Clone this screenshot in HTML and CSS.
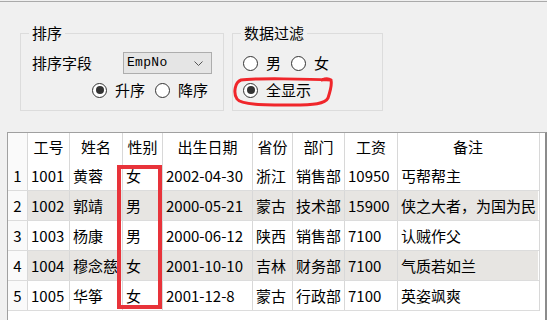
FILE: index.html
```html
<!DOCTYPE html>
<html lang="zh-CN">
<head>
  <meta charset="UTF-8" />
  <title>员工信息</title>
  <link rel="stylesheet" href="styles.css">
</head>
<body>
  <div class="topline"></div>

  <div class="panel">
    <div class="group group-sort">
      <span class="group-title">排序</span>
      <div class="row">
        <span class="field-label">排序字段</span>
        <div class="combo">
          <span class="combo-text">EmpNo</span>
          <svg class="combo-arrow" width="9" height="5" viewBox="0 0 9 5">
            <polyline points="0.5,0.5 4.5,4.5 8.5,0.5" fill="none" stroke="#555" stroke-width="1"/>
          </svg>
        </div>
      </div>
      <div class="row radios indent">
        <span class="radio checked"></span><span class="radio-label">升序</span>
        <span class="radio"></span><span class="radio-label">降序</span>
      </div>
    </div>

    <div class="group group-filter">
      <span class="group-title">数据过滤</span>
      <div class="row radios">
        <span class="radio"></span><span class="radio-label">男</span>
        <span class="radio"></span><span class="radio-label">女</span>
      </div>
      <div class="row radios second">
        <span class="radio checked"></span><span class="radio-label">全显示</span>
      </div>
      <!-- 手画的红圈 -->
      <svg class="mark-circle" width="104" height="34" viewBox="0 0 104 34">
        <path d="M99 5 C80 4, 22 3, 9 5 C3 7, 1 18, 5 24 C9 30, 32 30, 60 30 C82 30, 93 29, 96 23 C98 17, 100 9, 99 5 C96 3, 92 4, 90 5"
              fill="none" stroke="#f0262b" stroke-width="3" stroke-linecap="round"/>
      </svg>
    </div>
  </div>

  <div class="grid-wrap">
    <div class="grid">
      <div class="tr head">
        <div class="rh"></div>
        <div class="td">工号</div>
        <div class="td">姓名</div>
        <div class="td">性别</div>
        <div class="td">出生日期</div>
        <div class="td">省份</div>
        <div class="td">部门</div>
        <div class="td">工资</div>
        <div class="td">备注</div>
      </div>
      <div class="tr">
        <div class="rh">1</div>
        <div class="td">1001</div><div class="td">黄蓉</div><div class="td">女</div>
        <div class="td">2002-04-30</div><div class="td">浙江</div><div class="td">销售部</div>
        <div class="td">10950</div><div class="td">丐帮帮主</div>
      </div>
      <div class="tr alt">
        <div class="rh">2</div>
        <div class="td">1002</div><div class="td">郭靖</div><div class="td">男</div>
        <div class="td">2000-05-21</div><div class="td">蒙古</div><div class="td">技术部</div>
        <div class="td">15900</div><div class="td">侠之大者，为国为民</div>
      </div>
      <div class="tr">
        <div class="rh">3</div>
        <div class="td">1003</div><div class="td">杨康</div><div class="td">男</div>
        <div class="td">2000-06-12</div><div class="td">陕西</div><div class="td">销售部</div>
        <div class="td">7100</div><div class="td">认贼作父</div>
      </div>
      <div class="tr alt">
        <div class="rh">4</div>
        <div class="td">1004</div><div class="td">穆念慈</div><div class="td">女</div>
        <div class="td">2001-10-10</div><div class="td">吉林</div><div class="td">财务部</div>
        <div class="td">7100</div><div class="td">气质若如兰</div>
      </div>
      <div class="tr">
        <div class="rh">5</div>
        <div class="td">1005</div><div class="td">华筝</div><div class="td">女</div>
        <div class="td">2001-12-8</div><div class="td">蒙古</div><div class="td">行政部</div>
        <div class="td">7100</div><div class="td">英姿飒爽</div>
      </div>
    </div>
    <div class="mark-rect"></div>
  </div>
</body>
</html>
```

FILE: styles.css
```css
body {
  margin: 0;
  width: 547px;
  height: 320px;
  overflow: hidden;
  background: #f0f0f0;
  font-family: "Noto Sans CJK SC", "Noto Sans", sans-serif;
  font-size: 15px;
  color: #000;
}

.topline {
  margin-top: 1px;
  height: 1px;
  background: #aaaaaa;
}

.panel {
  display: flex;
  gap: 8px;
  padding: 31px 0 0 20px;
  height: 99px;
}

.group {
  position: relative;
  border: 1px solid #dcdcdc;
  height: 76px;
}

.group-sort {
  width: 191px;
  padding-left: 11px;
}

.group-filter {
  width: 139px;
  padding-left: 10px;
}

.group-title {
  position: absolute;
  top: -10px;
  left: 8px;
  padding: 0 3px;
  line-height: 18px;
  background: #f0f0f0;
}

.row {
  display: flex;
  align-items: center;
  height: 22px;
  line-height: 22px;
}

.group-sort .row:first-of-type {
  margin-top: 18px;
}

.field-label {
  width: 91px;
}

.combo {
  height: 20px;
  width: 76px;
  border: 1px solid #adadad;
  background: #e5e5e5;
  display: flex;
  align-items: center;
  justify-content: space-between;
  padding: 0 8px 0 3px;
}

.combo-text {
  font-family: "Liberation Mono", monospace;
  font-size: 13px;
  letter-spacing: 0.3px;
}

.indent {
  margin-top: 5px;
  padding-left: 60px;
}

.radios .radio + .radio-label {
  margin-left: 8px;
  margin-right: 10px;
}

.radio {
  width: 13px;
  height: 13px;
  border: 1px solid #333;
  border-radius: 50%;
  background: #fff;
  position: relative;
  flex: none;
}

.radio.checked::after {
  content: "";
  position: absolute;
  left: 2.5px;
  top: 2.5px;
  width: 8px;
  height: 8px;
  border-radius: 50%;
  background: #333;
}

.group-filter .row:first-of-type {
  margin-top: 18px;
}

.group-filter .second {
  margin-top: 5px;
}

.mark-circle {
  position: absolute;
  left: -1px;
  top: 41px;
}

.grid-wrap {
  position: relative;
  margin-left: 7px;
  width: 537px;
  height: 200px;
  border-top: 1px solid #a0a0a0;
  border-left: 1px solid #a0a0a0;
  border-right: 2px solid #8c8c8c;
  background: #fff;
}

.grid {
  width: 531px;
  border-right: 1px solid #d8d8d8;
}

.tr {
  display: flex;
  height: 29px;
  border-bottom: 1px solid #dcdcdc;
  line-height: 29px;
}

.tr.head {
  height: 28px;
  line-height: 28px;
  border-bottom: none;
}

.tr.alt .td {
  background: #e7e5e2;
}

.rh {
  width: 19px;
  text-align: center;
  background: #fafafa;
  flex: none;
}

.td {
  flex: none;
  border-left: 1px solid #d8d8d8;
  padding-left: 3px;
  white-space: nowrap;
  overflow: hidden;
  box-sizing: border-box;
}

.head .td {
  text-align: center;
  padding-left: 0;
}

.td:nth-child(2) { width: 42px; }
.td:nth-child(3) { width: 53px; }
.td:nth-child(4) { width: 40px; }
.td:nth-child(5) { width: 90px; }
.td:nth-child(6) { width: 40px; }
.td:nth-child(7) { width: 52px; }
.td:nth-child(8) { width: 53px; }
.td:nth-child(9) { width: 141px; }

.mark-rect {
  position: absolute;
  left: 109px;
  top: 32px;
  width: 37px;
  height: 136px;
  border: 4px solid #e8333a;
}
```
